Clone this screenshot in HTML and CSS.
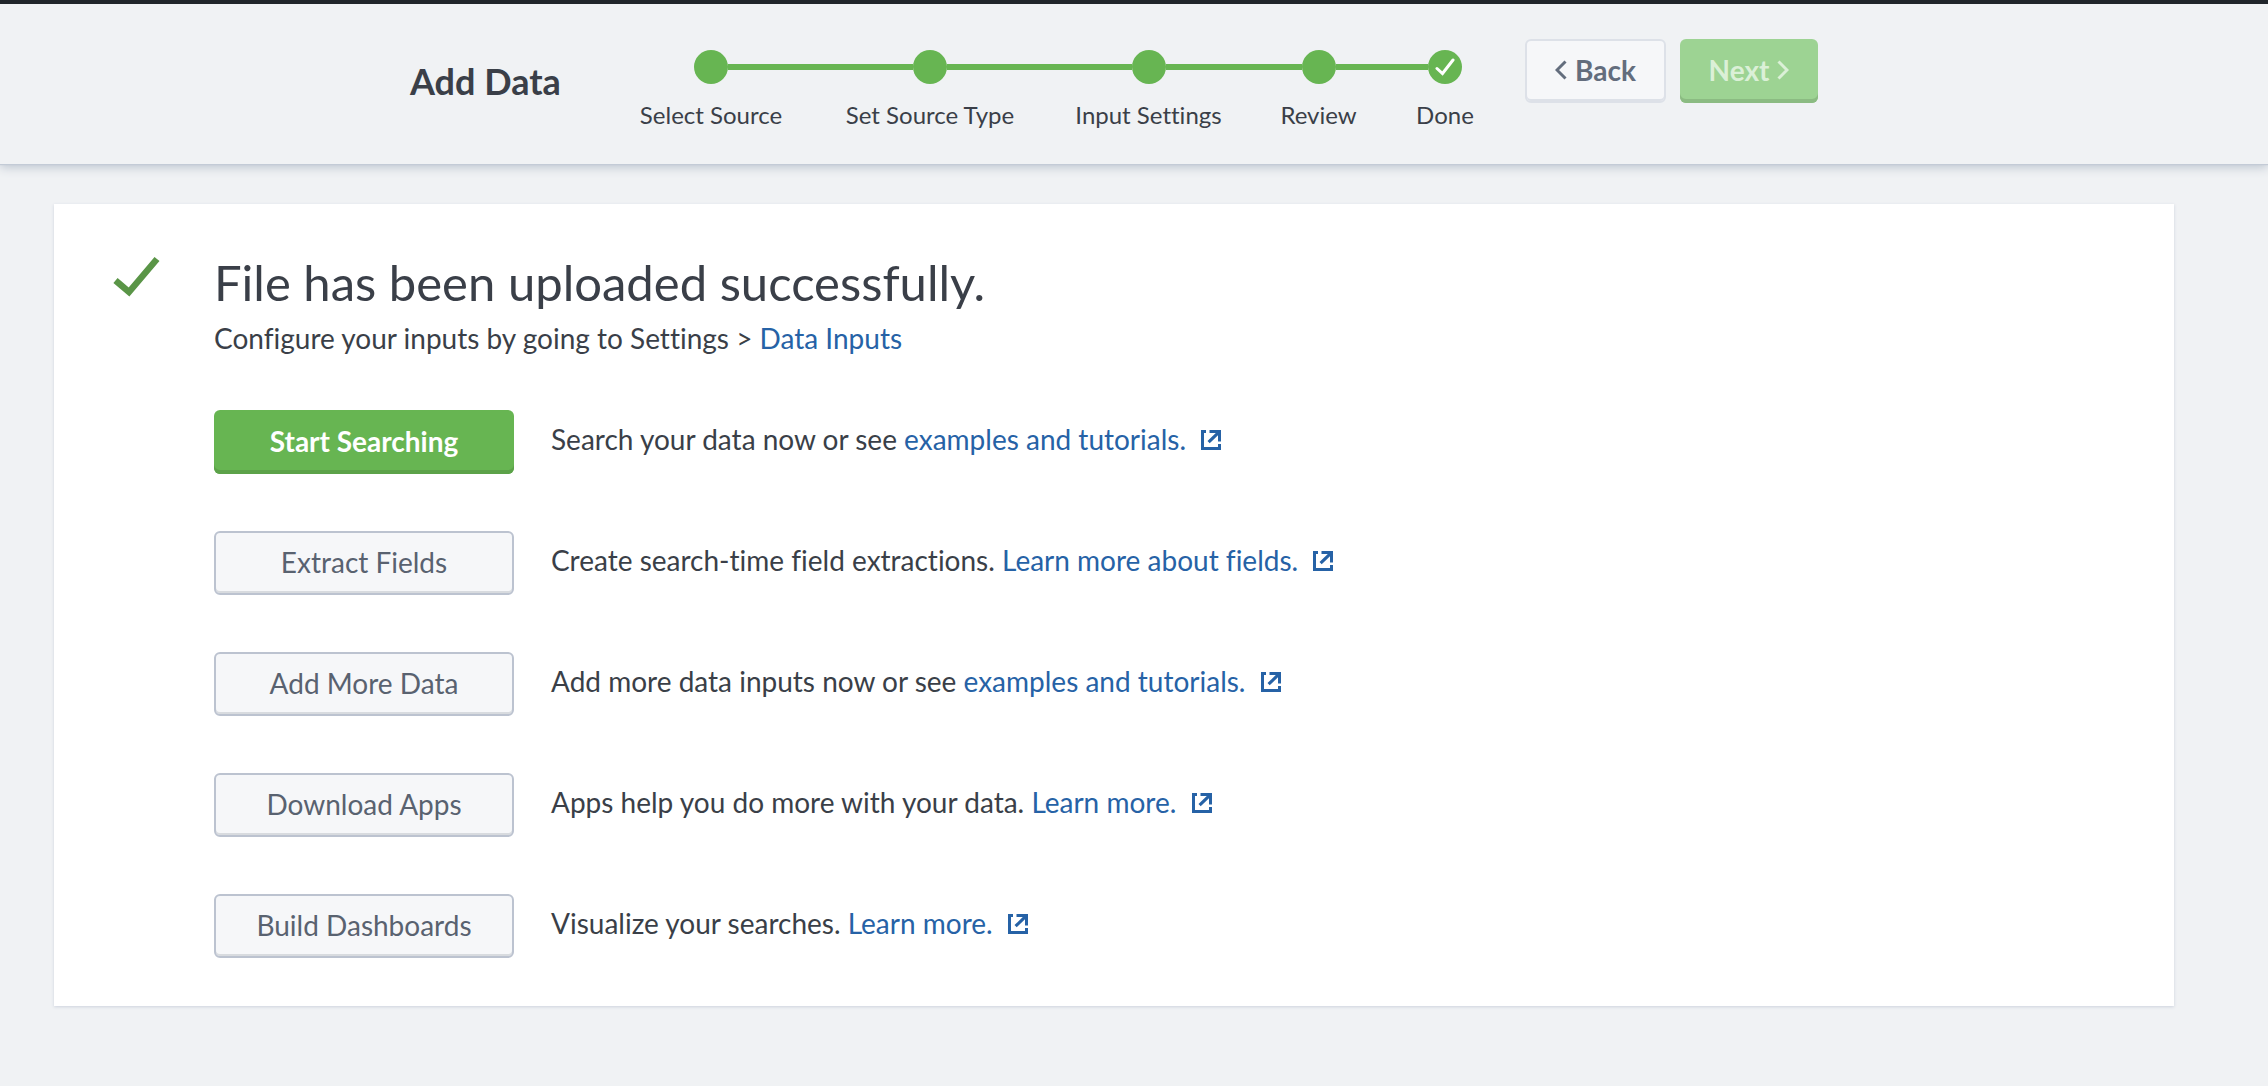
FILE: index.html
```html
<!DOCTYPE html>
<html lang="en">
<head>
<meta charset="utf-8">
<meta name="viewport" content="width=device-width, initial-scale=1">
<title>Add Data</title>
<link rel="stylesheet" href="styles.css">
</head>
<body>
<svg class="sprite" aria-hidden="true">
  <symbol id="external" viewBox="0 0 20 20">
    <path d="M5 1.5H1.5V18.5H18.5V14" fill="none" stroke="currentColor" stroke-width="3"/>
    <path d="M8.5 0H20V11.500H17V5.300L8.700 13.300L6.500 11.100L14.800 3H8.500Z" fill="currentColor"/>
  </symbol>
</svg>
<header class="wizard">
  <h1 class="wizard-title">Add Data</h1>
  <ol class="steps">
    <li class="step"><span class="step-track"><span class="step-dot"></span></span><span class="step-label">Select Source</span></li>
    <li class="step"><span class="step-track"><span class="step-dot"></span></span><span class="step-label">Set Source Type</span></li>
    <li class="step"><span class="step-track"><span class="step-dot"></span></span><span class="step-label">Input Settings</span></li>
    <li class="step"><span class="step-track"><span class="step-dot"></span></span><span class="step-label">Review</span></li>
    <li class="step" aria-current="step"><span class="step-track"><span class="step-dot"><svg class="step-check" viewBox="0 0 20 18" aria-hidden="true"><path d="M2 10.500L7.500 15.500L18 2" fill="none" stroke="currentColor" stroke-width="3" stroke-linecap="round"/></svg></span></span><span class="step-label">Done</span></li>
  </ol>
  <div class="wizard-nav">
    <button class="btn btn-back" type="button"><svg class="chevron" viewBox="0 0 12 20" aria-hidden="true"><path d="M10.500 1.500L2 10L10.500 18.500" fill="none" stroke="currentColor" stroke-width="3"/></svg>Back</button>
    <button class="btn btn-next" type="button" disabled>Next<svg class="chevron" viewBox="0 0 12 20" aria-hidden="true"><path d="M1.500 1.500L10 10L1.500 18.500" fill="none" stroke="currentColor" stroke-width="3"/></svg></button>
  </div>
</header>
<main class="panel">
  <svg class="panel-check" viewBox="0 0 48 42" aria-hidden="true"><path d="M3.500 24.500L17 36L45 3" fill="none" stroke="currentColor" stroke-width="6.500"/></svg>
  <div class="panel-body">
    <h2 class="panel-title">File has been uploaded successfully.</h2>
    <p class="panel-text">Configure your inputs by going to Settings &gt; <a href="#">Data Inputs</a></p>
    <ul class="actions">
      <li class="action"><button class="btn btn-primary" type="button">Start Searching</button><p class="panel-text">Search your data now or see <a href="#">examples and tutorials. <svg class="external"><use href="#external"/></svg></a></p></li>
      <li class="action"><button class="btn" type="button">Extract Fields</button><p class="panel-text">Create search-time field extractions. <a href="#">Learn more about fields. <svg class="external"><use href="#external"/></svg></a></p></li>
      <li class="action"><button class="btn" type="button">Add More Data</button><p class="panel-text">Add more data inputs now or see <a href="#">examples and tutorials. <svg class="external"><use href="#external"/></svg></a></p></li>
      <li class="action"><button class="btn" type="button">Download Apps</button><p class="panel-text">Apps help you do more with your data. <a href="#">Learn more. <svg class="external"><use href="#external"/></svg></a></p></li>
      <li class="action"><button class="btn" type="button">Build Dashboards</button><p class="panel-text">Visualize your searches. <a href="#">Learn more. <svg class="external"><use href="#external"/></svg></a></p></li>
    </ul>
  </div>
</main>
</body>
</html>
```
FILE: styles.css
```css
* { box-sizing: border-box; }

body {
  margin: 0;
  background: #f0f2f4;
  color: #3a3f48;
  font-family: Lato, "Open Sans", sans-serif;
  font-size: 28px;
  line-height: 40px;
  font-weight: 400;
  font-variant-ligatures: none;
}

h1, h2, p, ol, ul { margin: 0; padding: 0; }
ol, ul { list-style: none; }
a { color: #2662a6; text-decoration: none; }

.sprite { display: none; }

/* Wizard header */
.wizard {
  display: flex;
  align-items: flex-start;
  border-top: 4px solid #20252a;
  padding: 35px 40px 34px 410px;
  background: #f0f2f4;
  box-shadow: 0 1px 1px #c3cbd6, 0 3px 10px #b9c2cd;
}

.wizard-title {
  width: 198px;
  padding-top: 22px;
  font-size: 36px;
  line-height: 40px;
  font-weight: 700;
}

.steps {
  display: grid;
  grid-template-columns: 206px 232px 205px 135px 118px;
  padding-top: 11px;
}

.step { text-align: center; }

.step-track {
  display: flex;
  align-items: center;
}

.step-track::before,
.step-track::after {
  content: "";
  flex: 1;
  height: 6px;
  background: #67b552;
}

.step:first-child .step-track::before,
.step:last-child .step-track::after { background: transparent; }

.step-dot {
  display: flex;
  align-items: center;
  justify-content: center;
  width: 34px;
  height: 34px;
  border-radius: 50%;
  background: #67b552;
}

.step-check { width: 20px; height: 18px; color: #fff; }

.step-label {
  display: block;
  padding-top: 16px;
  font-size: 24px;
  line-height: 30px;
  white-space: nowrap;
}

.wizard-nav { display: flex; gap: 14px; margin-left: 21px; }

/* Buttons */
.btn {
  display: flex;
  align-items: center;
  justify-content: center;
  gap: 8px;
  width: 300px;
  height: 64px;
  padding: 0 0 2px;
  border: 2px solid #bcc3d0;
  border-radius: 6px;
  background: #f6f7f9;
  box-shadow: inset 0 -2px 0 #d8dbdf;
  color: #596270;
  font: inherit;
  white-space: nowrap;
}

.btn-back {
  width: 141px;
  border-color: #dde1e8;
  box-shadow: inset 0 -2px 0 #dde1e8;
  color: #636d7d;
  font-weight: 700;
}

.btn-next {
  width: 138px;
  border: 0;
  background: #9dd393;
  box-shadow: inset 0 -4px 0 #8bbb82;
  color: #dbf0d7;
  font-weight: 700;
}

.btn-primary {
  border: 0;
  background: #67b552;
  box-shadow: inset 0 -4px 0 #5ca249;
  color: #fff;
  font-weight: 700;
}

.chevron { width: 12px; height: 20px; }

/* Result panel */
.panel {
  display: flex;
  gap: 54px;
  margin: 40px 94px 40px 54px;
  padding: 48px 40px 48px 58px;
  background: #fff;
  box-shadow: 0 1px 3px #cdd2de;
}

.panel-check {
  flex: none;
  width: 48px;
  height: 42px;
  margin-top: 4px;
  color: #5a9547;
}

.panel-title {
  font-size: 49px;
  line-height: 60px;
  font-weight: 400;
}

.panel-title + .panel-text { padding-top: 6px; }

.actions {
  display: flex;
  flex-direction: column;
  gap: 57px;
  padding-top: 52px;
}

.action { display: flex; gap: 37px; }
.action .panel-text { padding-top: 9px; }

.external {
  width: 20px;
  height: 20px;
  margin-left: 8px;
}
```
